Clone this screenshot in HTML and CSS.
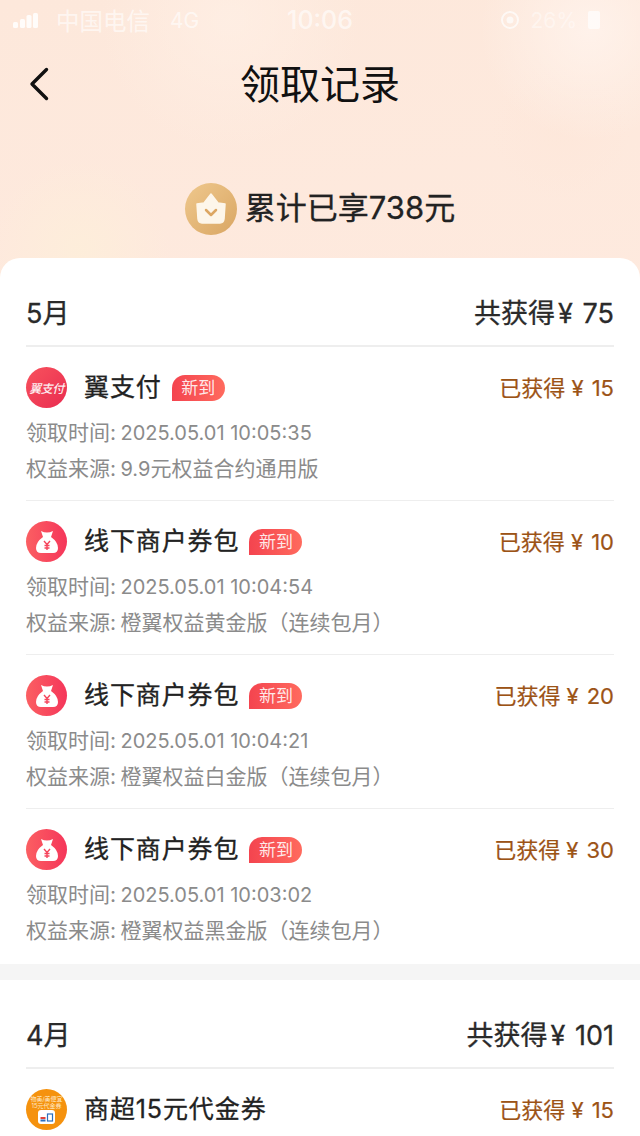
FILE: index.html
```html
<!DOCTYPE html>
<html lang="zh-CN">
<head>
<meta charset="utf-8">
<title>领取记录</title>
<link rel="stylesheet" href="styles.css">
</head>
<body>
<div class="page">
  <header class="hero">
    <div class="status">
      <div class="status-left">
        <svg class="signal" width="25" height="16" viewBox="0 0 25 16"><rect x="0" y="10" width="5" height="6" rx="1.500"/><rect x="7" y="7" width="5" height="9" rx="1.500"/><rect x="13.500" y="3" width="5" height="13" rx="1.500"/><rect x="20" y="1" width="5" height="15" rx="1.500"/></svg>
        <span class="carrier">中国电信</span>
        <span class="net">4G</span>
      </div>
      <div class="clock">10:06</div>
      <div class="status-right">
        <svg width="20" height="20" viewBox="0 0 20 20"><circle cx="10" cy="10" r="8" fill="none" stroke="#fff" stroke-width="2"/><circle cx="10" cy="10" r="3.500" fill="#fff"/></svg>
        <span class="pct">26%</span>
        <span class="batt"></span>
      </div>
    </div>
    <nav class="nav">
      <svg class="back" width="24" height="36" viewBox="0 0 24 36"><path d="M20.500 3.500 L6 18 L20.500 32.500" fill="none" stroke="#111" stroke-width="3.400" stroke-linecap="round" stroke-linejoin="round"/></svg>
      <h1 class="title">领取记录</h1>
    </nav>
    <div class="total">
      <svg class="crown" width="52" height="52" viewBox="0 0 52 52">
        <defs><linearGradient id="g" x1="0" y1="0" x2="1" y2="1"><stop offset="0" stop-color="#efc88d"/><stop offset="1" stop-color="#d9a663"/></linearGradient></defs>
        <circle cx="26" cy="26" r="26" fill="url(#g)"/>
        <path d="M12 21 L19 20 L26 11 L33 20 L40 21 L39 36 Q38.500 40 35 40 H17 Q13.500 40 13 36 Z" fill="#fdf6ea" stroke="#fdf6ea" stroke-width="1.500" stroke-linejoin="round"/>
        <path d="M21 27 L26 32 L31 27" fill="none" stroke="#dca763" stroke-width="2.500" stroke-linecap="round" stroke-linejoin="round"/>
      </svg>
      <span class="total-text">累计已享738元</span>
    </div>
  </header>

  <main class="card">
    <section class="month">
      <div class="month-head"><span>5月</span><span>共获得<span class="yen">¥</span> 75</span></div>
      <article class="item">
        <div class="row">
          <span class="icon icon-pay"><span class="pay-text">翼支付</span></span>
          <span class="name">翼支付</span><span class="tag">新到</span>
          <span class="amount">已获得<span class="yen">¥</span> 15</span>
        </div>
        <p class="meta">领取时间: <span class="num">2025.05.01 10:05:35</span></p>
        <p class="meta">权益来源: <span class="num">9.9</span>元权益合约通用版</p>
      </article>
      <article class="item">
        <div class="row">
          <span class="icon icon-bag"><svg width="40" height="40" viewBox="0 0 40 40"><path d="M14 9 Q20 12 26 9 L24 15 Q31 20 31 26 Q31 31 26 31 H14 Q9 31 9 26 Q9 20 16 15 Z" fill="#fff"/><path d="M17 19 L20 22.500 L23 19 M20 22.500 V28 M17.500 23.500 H22.500 M17.500 26 H22.500" fill="none" stroke="#f5455c" stroke-width="1.400"/></svg></span>
          <span class="name">线下商户券包</span><span class="tag">新到</span>
          <span class="amount">已获得<span class="yen">¥</span> 10</span>
        </div>
        <p class="meta">领取时间: <span class="num">2025.05.01 10:04:54</span></p>
        <p class="meta">权益来源: 橙翼权益黄金版（连续包月）</p>
      </article>
      <article class="item">
        <div class="row">
          <span class="icon icon-bag"><svg width="40" height="40" viewBox="0 0 40 40"><path d="M14 9 Q20 12 26 9 L24 15 Q31 20 31 26 Q31 31 26 31 H14 Q9 31 9 26 Q9 20 16 15 Z" fill="#fff"/><path d="M17 19 L20 22.500 L23 19 M20 22.500 V28 M17.500 23.500 H22.500 M17.500 26 H22.500" fill="none" stroke="#f5455c" stroke-width="1.400"/></svg></span>
          <span class="name">线下商户券包</span><span class="tag">新到</span>
          <span class="amount">已获得<span class="yen">¥</span> 20</span>
        </div>
        <p class="meta">领取时间: <span class="num">2025.05.01 10:04:21</span></p>
        <p class="meta">权益来源: 橙翼权益白金版（连续包月）</p>
      </article>
      <article class="item">
        <div class="row">
          <span class="icon icon-bag"><svg width="40" height="40" viewBox="0 0 40 40"><path d="M14 9 Q20 12 26 9 L24 15 Q31 20 31 26 Q31 31 26 31 H14 Q9 31 9 26 Q9 20 16 15 Z" fill="#fff"/><path d="M17 19 L20 22.500 L23 19 M20 22.500 V28 M17.500 23.500 H22.500 M17.500 26 H22.500" fill="none" stroke="#f5455c" stroke-width="1.400"/></svg></span>
          <span class="name">线下商户券包</span><span class="tag">新到</span>
          <span class="amount">已获得<span class="yen">¥</span> 30</span>
        </div>
        <p class="meta">领取时间: <span class="num">2025.05.01 10:03:02</span></p>
        <p class="meta">权益来源: 橙翼权益黑金版（连续包月）</p>
      </article>
    </section>
    <div class="divider"></div>
    <section class="month">
      <div class="month-head"><span>4月</span><span>共获得<span class="yen">¥</span> 101</span></div>
      <article class="item">
        <div class="row">
          <span class="icon icon-shop">
            <span class="shop-text">物美/美便宜<br>15元代金券</span>
            <svg width="17" height="14" viewBox="0 0 17 14"><rect width="17" height="14" rx="3" fill="#fff"/><rect x="2.500" y="7" width="5" height="2" fill="#e0413a"/><rect x="2.500" y="9.500" width="5" height="2" fill="#2a6fc0"/><rect x="9.500" y="4" width="5" height="7" fill="none" stroke="#2a6fc0" stroke-width="1.200"/></svg>
          </span>
          <span class="name">商超15元代金券</span>
          <span class="amount">已获得<span class="yen">¥</span> 15</span>
        </div>
      </article>
    </section>
  </main>
</div>
</body>
</html>
```

FILE: styles.css
```css
* { box-sizing: border-box; }
html, body { margin: 0; padding: 0; }
body {
  width: 640px;
  height: 1136px;
  overflow: hidden;
  font-family: "Inter", "Noto Sans CJK SC", sans-serif;
  color: #222;
}
.page {
  height: 1136px;
  overflow: hidden;
  background:
    radial-gradient(circle at 590px 30px, rgba(255, 243, 236, 0.9), rgba(255, 243, 236, 0) 110px),
    radial-gradient(circle at 230px 20px, rgba(255, 240, 230, 0.7), rgba(255, 240, 230, 0) 130px),
    radial-gradient(circle at 80px 250px, rgba(253, 238, 218, 0.9), rgba(253, 238, 218, 0) 90px),
    radial-gradient(circle at 560px 130px, rgba(253, 231, 218, 0.7), rgba(253, 231, 218, 0) 70px),
    linear-gradient(170deg, #fde8db 0%, #feeadf 40%, #fdeee4 100%);
}
.hero { height: 268px; }
.status {
  height: 40px;
  padding: 0 13px;
  display: grid;
  grid-template-columns: 1fr auto 1fr;
  align-items: center;
  color: rgba(255, 255, 255, 0.62);
}
.status-left { display: flex; align-items: center; }
.signal { fill: rgba(255, 255, 255, 0.85); margin-right: 18px; }
.carrier { font-size: 23.500px; }
.net { font-size: 21px; margin-left: 20px; }
.clock { font-size: 25px; font-weight: 500; }
.status-right { display: flex; align-items: center; justify-content: flex-end; gap: 11px; padding-right: 27px; opacity: 0.7; }
.pct { font-size: 21px; }
.batt { width: 12px; height: 18px; background: #fff; border-radius: 2px; }
.nav {
  height: 88px;
  padding-top: 2px;
  display: flex;
  align-items: center;
  justify-content: center;
  position: relative;
}
.back { position: absolute; left: 26px; top: 26px; }
.title { margin: 0; font-size: 40px; line-height: 56px; font-weight: 400; color: #111; }
.total {
  margin-top: 55px;
  height: 52px;
  display: flex;
  align-items: center;
  justify-content: center;
  gap: 8px;
}
.total-text { font-size: 31px; line-height: 46px; padding-bottom: 3px; color: #222; -webkit-text-stroke: 0.300px #222; }
.card {
  margin-top: -10px;
  background: #fff;
  border-radius: 20px 20px 0 0;
  height: 878px;
  overflow: hidden;
}
.month { padding: 0 26px; }
.month-head {
  height: 89px;
  padding-top: 20px;
  border-bottom: 2px solid #eee;
  display: flex;
  align-items: center;
  justify-content: space-between;
  font-size: 27px;
  color: #2a2a2a;
  -webkit-text-stroke: 0.300px #2a2a2a;
}
.yen { margin: 0 2px 0 3px; }
.item {
  height: 154px;
  padding-top: 20px;
  border-bottom: 1px solid #eee;
}
.month .item:nth-last-child(1) { height: 155px; border-bottom: 0; }
.row { display: flex; align-items: center; height: 41px; }
.icon {
  width: 41px;
  height: 41px;
  border-radius: 50%;
  flex: none;
  margin-right: 17px;
  display: flex;
  align-items: center;
  justify-content: center;
}
.icon-pay { background: linear-gradient(135deg, #f8525d, #e92c50); }
.pay-text { color: #fff; font-size: 12px; font-style: italic; font-weight: 500; letter-spacing: -0.500px; white-space: nowrap; opacity: 0.9; }
.icon-bag { background: linear-gradient(90deg, #fb5f62, #f5365a); }
.icon-shop { background: #f5920e; flex-direction: column; gap: 1px; }
.shop-text { color: #ffe9c6; font-size: 6px; line-height: 7px; text-align: center; white-space: nowrap; }
.name { font-size: 25px; line-height: 32px; padding-bottom: 2px; color: #222; letter-spacing: 0.900px; -webkit-text-stroke: 0.300px #222; }
.tag {
  margin-left: 10px;
  width: 53px;
  height: 26px;
  line-height: 26px;
  text-align: center;
  font-size: 17px;
  color: rgba(255, 255, 255, 0.88);
  background: linear-gradient(90deg, #f4444f, #ff6a5e);
  border-radius: 13px 13px 13px 0;
}
.amount { margin-left: auto; font-size: 22px; line-height: 30px; color: #9c5316; -webkit-text-stroke: 0.200px #9c5316; }
.amount .yen { margin: 0 2px 0 6px; }
.meta {
  margin: 0;
  font-size: 21px;
  line-height: 36px;
  color: #8b8b8b;
  word-spacing: -1.500px;
}
.num { font-size: 20px; word-spacing: 0; }
.row + .meta { margin-top: 7px; }
.divider { height: 16px; background: #f5f5f5; }
```
